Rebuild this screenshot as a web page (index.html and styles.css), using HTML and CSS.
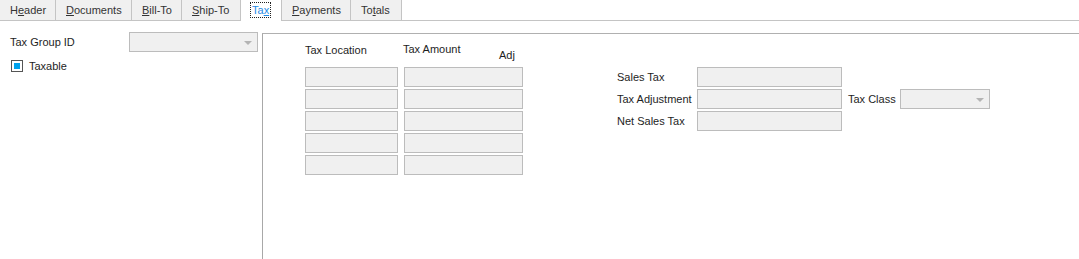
FILE: index.html
```html
<!DOCTYPE html>
<html lang="en">
<head>
  <meta charset="UTF-8" />
  <title>Order Entry | Tax</title>
  <link rel="stylesheet" href="styles.css">
</head>
<body>
  <nav class="tabs">
    <div class="tab">H<u>e</u>ader</div>
    <div class="tab"><u>D</u>ocuments</div>
    <div class="tab"><u>B</u>ill-To</div>
    <div class="tab"><u>S</u>hip-To</div>
    <div class="tab activo"><span class="foco">Ta<u>x</u></span></div>
    <div class="tab"><u>P</u>ayments</div>
    <div class="tab">To<u>t</u>als</div>
  </nav>

  <main class="contenido">
    <!-- Panel izquierdo -->
    <section class="panel-izq">
      <div class="fila-campo">
        <label class="etiqueta">Tax Group ID</label>
        <div class="combo combo-grupo"><span class="flecha"></span></div>
      </div>
      <div class="fila-check">
        <span class="check"><span class="check-marca"></span></span>
        <span>Taxable</span>
      </div>
    </section>

    <!-- Panel derecho -->
    <section class="panel-der">
      <div class="tabla">
        <div class="tabla-cab">
          <span class="col-loc">Tax Location</span>
          <span class="col-monto">Tax Amount</span>
          <span class="col-adj">Adj</span>
        </div>
        <div class="tabla-filas">
          <div class="caja"></div><div class="caja"></div>
          <div class="caja"></div><div class="caja"></div>
          <div class="caja"></div><div class="caja"></div>
          <div class="caja"></div><div class="caja"></div>
          <div class="caja"></div><div class="caja"></div>
        </div>
      </div>

      <div class="totales">
        <span class="etiqueta">Sales Tax</span>
        <div class="caja"></div>
        <span></span><span></span>

        <span class="etiqueta">Tax Adjustment</span>
        <div class="caja"></div>
        <span class="etiqueta clase">Tax Class</span>
        <div class="combo"><span class="flecha"></span></div>

        <span class="etiqueta">Net Sales Tax</span>
        <div class="caja"></div>
        <span></span><span></span>
      </div>
    </section>
  </main>
</body>
</html>
```

FILE: styles.css
```css
body {
  font-family: "Liberation Sans", Arial, sans-serif;
  font-size: 11px;
  color: #1e1e1e;
  background: #ffffff;
  margin: 0;
  padding: 0;
  width: 1079px;
  height: 259px;
  overflow: hidden;
}

u {
  text-decoration: underline;
  text-underline-offset: 1px;
}

/* Pestañas */
.tabs {
  display: flex;
  height: 20px;
  border-bottom: 1px solid #c4c4c4;
}

.tab {
  box-sizing: border-box;
  height: 20px;
  padding: 0 0 0 10px;
  background: #f0f0f0;
  border-right: 1px solid #c4c4c4;
  color: #333;
  line-height: 20px;
}

.tab:nth-child(1) { width: 56px; }
.tab:nth-child(2) { width: 76px; }
.tab:nth-child(3) { width: 50px; }
.tab:nth-child(4) { width: 59px; }
.tab:nth-child(5) { width: 41px; }
.tab:nth-child(6) { width: 69px; }
.tab:nth-child(7) { width: 51px; }

.tab.activo {
  background: #ffffff;
  height: 21px;
  margin-bottom: -1px;
  padding-left: 9px;
  color: #1e8ae6;
}

.foco {
  display: inline-block;
  line-height: 14px;
  padding: 0 1px;
  border: 1px dotted #222;
  margin-top: 2px;
}

/* Contenido */
.contenido {
  display: flex;
  height: 238px;
}

.panel-izq {
  width: 262px;
  flex-shrink: 0;
}

.fila-campo {
  display: flex;
  align-items: center;
  margin-top: 11px;
  padding-left: 10px;
}

.fila-campo .etiqueta {
  width: 119px;
}

.combo {
  position: relative;
  box-sizing: border-box;
  height: 20px;
  background: #f0f0f0;
  border: 1px solid #bcbcbc;
}

.combo-grupo {
  width: 129px;
}

.flecha {
  position: absolute;
  right: 5px;
  top: 8px;
  width: 0;
  height: 0;
  border-left: 4px solid transparent;
  border-right: 4px solid transparent;
  border-top: 4px solid #b4b4b4;
}

.fila-check {
  display: flex;
  align-items: center;
  gap: 6px;
  margin-top: 8px;
  padding-left: 11px;
}

.check {
  box-sizing: border-box;
  width: 12px;
  height: 12px;
  border: 1px solid #555;
  padding: 2px;
  background: #fff;
}

.check-marca {
  display: block;
  width: 6px;
  height: 6px;
  background: #00a2ed;
}

.panel-der {
  flex: 1;
  display: flex;
  margin-top: 12px;
  border-top: 1px solid #b0b0b0;
  border-left: 1px solid #a8a8a8;
  padding-left: 42px;
}

.caja {
  box-sizing: border-box;
  height: 20px;
  background: #f0f0f0;
  border: 1px solid #bcbcbc;
}

/* Tabla de ubicaciones */
.tabla {
  width: 218px;
}

.tabla-cab {
  position: relative;
  height: 33px;
}

.tabla-cab span {
  position: absolute;
}

.col-loc { left: 0; top: 10px; }
.col-monto { left: 98px; top: 9px; }
.col-adj { left: 194px; top: 15px; }

.tabla-filas {
  display: grid;
  grid-template-columns: 93px 119px;
  column-gap: 6px;
  row-gap: 2px;
}

/* Totales */
.totales {
  display: grid;
  grid-template-columns: 80px 145px 58px 90px;
  grid-auto-rows: 20px;
  row-gap: 2px;
  align-items: center;
  margin-left: 94px;
  margin-top: 33px;
  align-self: flex-start;
}

.totales .clase {
  padding-left: 6px;
}
```
